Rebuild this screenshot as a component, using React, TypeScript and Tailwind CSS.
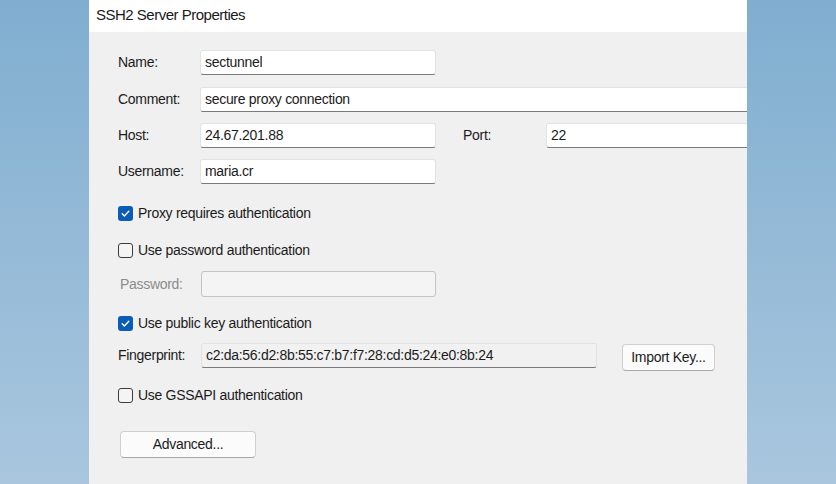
import React from "react";

const FONT = "font-['Liberation_Sans',Arial,sans-serif]";

function TextBox({
    value,
    width,
    disabled,
    readOnly,
}: {
    value?: string;
    width: string;
    disabled?: boolean;
    readOnly?: boolean;
}) {
    if (disabled) {
        return (
            <div
                className={`${width} h-[26px] shrink-0 rounded-[3px] border border-[#c4c4c4] bg-[#f4f4f4]`}
            />
        );
    }
    return (
        <div
            className={`${width} h-[25px] shrink-0 flex items-center rounded-[3px] border border-[#e2e2e2] border-b-[#7a7a7a] pl-[4px] ${
                readOnly ? "bg-[#f1f1f1]" : "bg-white"
            }`}
        >
            <span className="text-[14px] tracking-[-0.3px] text-[#1b1b1b]">
                {value}
            </span>
        </div>
    );
}

function Checkbox({ checked, label }: { checked: boolean; label: string }) {
    return (
        <div className="flex items-center h-[20px]">
            {checked ? (
                <div className="w-[15px] h-[15px] rounded-[3px] bg-[#0a5cb6] flex items-center justify-center">
                    <svg width="11" height="11" viewBox="0 0 11 11" fill="none">
                        <path
                            d="M2.2 5.8 L4.4 8 L8.8 3.2"
                            stroke="white"
                            strokeWidth="1.4"
                            strokeLinecap="round"
                            strokeLinejoin="round"
                        />
                    </svg>
                </div>
            ) : (
                <div className="w-[15px] h-[15px] rounded-[3px] border border-[#3c3c3c] bg-[#f4f4f4]" />
            )}
            <span className="ml-[5px] text-[14px] tracking-[-0.3px] text-[#1b1b1b]">
                {label}
            </span>
        </div>
    );
}

function Label({ text, gray }: { text: string; gray?: boolean }) {
    return (
        <span
            className={`w-[82px] shrink-0 text-[14px] tracking-[-0.3px] ${
                gray ? "text-[#8c8c8c] pl-[2px]" : "text-[#1b1b1b]"
            }`}
        >
            {text}
        </span>
    );
}

function Button({ text, width }: { text: string; width: string }) {
    return (
        <div
            className={`${width} h-[27px] flex items-center justify-center rounded-[4px] border border-[#cfcfcf] border-b-[#a9a9a9] bg-[#fbfbfb] text-[14px] tracking-[-0.3px] text-[#1b1b1b]`}
        >
            {text}
        </div>
    );
}

export default function App() {
    return (
        <div
            className={`${FONT} w-[836px] h-[484px] flex overflow-hidden bg-gradient-to-b from-[#80aed0] to-[#a9c6de]`}
        >
            <div className="w-[89px] shrink-0" />

            <div className="w-[658px] shrink-0 flex flex-col">
                {/* title bar */}
                <div className="h-[32px] bg-white flex items-center pl-[7px] pb-[2px]">
                    <span className="text-[15px] tracking-[-0.5px] text-[#1a1a1a]">
                        SSH2 Server Properties
                    </span>
                </div>

                {/* body */}
                <div className="flex-1 bg-[#f0f0f0] overflow-hidden pl-[29px] pt-[18px] flex flex-col">
                    <div className="flex items-center">
                        <Label text="Name:" />
                        <TextBox value="sectunnel" width="w-[236px]" />
                    </div>
                    <div className="flex items-center mt-[12px]">
                        <Label text="Comment:" />
                        <TextBox
                            value="secure proxy connection"
                            width="w-[600px]"
                        />
                    </div>
                    <div className="flex items-center mt-[11px]">
                        <Label text="Host:" />
                        <TextBox value="24.67.201.88" width="w-[236px]" />
                        <span className="ml-[27px] w-[83px] shrink-0 text-[14px] tracking-[-0.3px] text-[#1b1b1b]">
                            Port:
                        </span>
                        <TextBox value="22" width="w-[260px]" />
                    </div>
                    <div className="flex items-center mt-[11px]">
                        <Label text="Username:" />
                        <TextBox value="maria.cr" width="w-[236px]" />
                    </div>

                    <div className="mt-[19px]">
                        <Checkbox
                            checked
                            label="Proxy requires authentication"
                        />
                    </div>
                    <div className="mt-[17px]">
                        <Checkbox
                            checked={false}
                            label="Use password authentication"
                        />
                    </div>
                    <div className="flex items-center mt-[11px]">
                        <Label text="Password:" gray />
                        <div className="ml-[1px]">
                            <TextBox width="w-[235px]" disabled />
                        </div>
                    </div>

                    <div className="mt-[16px]">
                        <Checkbox
                            checked
                            label="Use public key authentication"
                        />
                    </div>
                    <div className="flex items-start mt-[10px] h-[28px]">
                        <div className="h-[25px] flex items-center">
                            <Label text="Fingerprint:" />
                        </div>
                        <div className="ml-[1px]">
                            <TextBox
                                value="c2:da:56:d2:8b:55:c7:b7:f7:28:cd:d5:24:e0:8b:24"
                                width="w-[396px]"
                                readOnly
                            />
                        </div>
                        <div className="ml-[25px] mt-[1px]">
                            <Button text="Import Key..." width="w-[93px]" />
                        </div>
                    </div>

                    <div className="mt-[14px]">
                        <Checkbox
                            checked={false}
                            label="Use GSSAPI authentication"
                        />
                    </div>

                    <div className="mt-[26px] ml-[2px]">
                        <Button text="Advanced..." width="w-[136px]" />
                    </div>
                </div>
            </div>

            <div className="flex-1" />
        </div>
    );
}
